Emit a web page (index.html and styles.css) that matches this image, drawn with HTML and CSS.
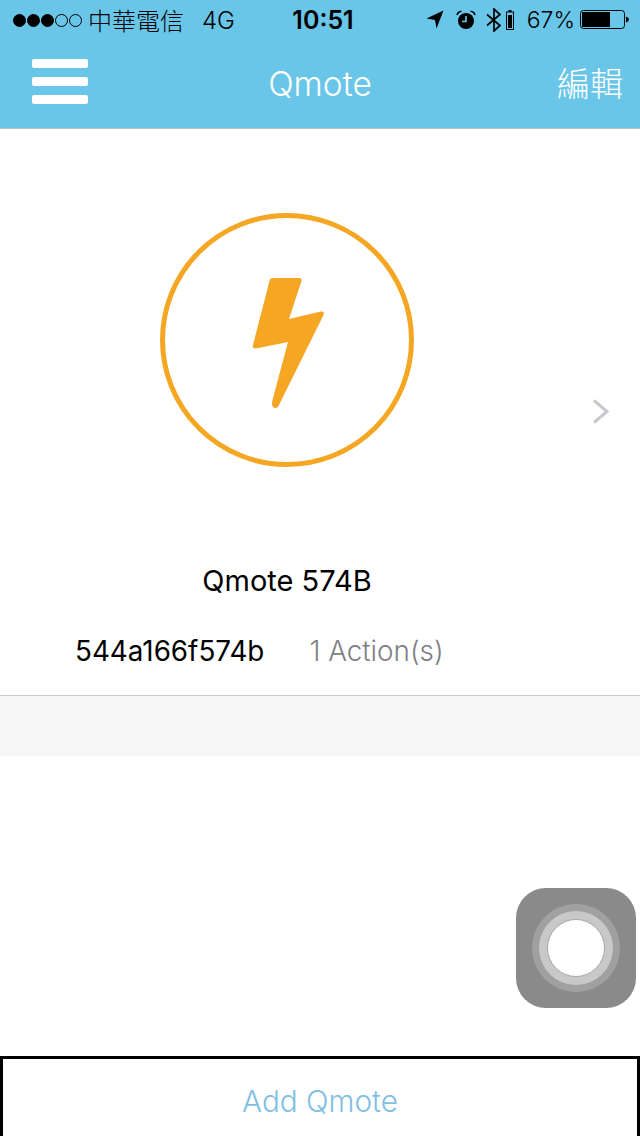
FILE: index.html
```html
<!DOCTYPE html>
<html lang="zh-Hant">
<head>
  <meta charset="UTF-8" />
  <title>Qmote</title>
  <link rel="stylesheet" href="styles.css">
</head>
<body>
  <div class="page">
    <header class="top-bar">
      <div class="status-bar">
        <div class="status-left">
          <span class="signal">
            <i class="dot"></i><i class="dot"></i><i class="dot"></i><i class="dot off"></i><i class="dot off"></i>
          </span>
          <span class="carrier">中華電信</span>
          <span class="network">4G</span>
        </div>
        <div class="status-time">10:51</div>
        <div class="status-right">
          <svg class="icon-location" width="18" height="20" viewBox="0 0 18 20">
            <path d="M0.5 8.5 L17.5 0.5 L10.5 18.5 L9 10 Z" fill="#000"/>
          </svg>
          <svg class="icon-alarm" width="20" height="20" viewBox="0 0 20 20">
            <circle cx="10" cy="11" r="8" fill="#000"/>
            <path d="M10 6 V11.5 H6" fill="none" stroke="#6ac6e8" stroke-width="1.6"/>
            <path d="M1 5 Q2 1.5 5.5 1.2 M19 5 Q18 1.5 14.5 1.2" fill="none" stroke="#000" stroke-width="1.6"/>
          </svg>
          <svg class="icon-bluetooth" width="16" height="24" viewBox="0 0 16 24">
            <path d="M1 6.5 L14 17.5 L8 23 V1 L14 6.5 L1 17.5" fill="none" stroke="#000" stroke-width="1.7"/>
          </svg>
          <svg class="icon-mini-battery" width="8" height="20" viewBox="0 0 8 20">
            <rect x="2.5" y="0" width="3" height="2" fill="#000"/>
            <rect x="0.5" y="2" width="7" height="17.5" fill="none" stroke="#000"/>
            <rect x="2" y="5" width="4" height="13" fill="#000"/>
          </svg>
          <span class="battery-text">67%</span>
          <svg class="icon-battery" width="49" height="20" viewBox="0 0 49 20">
            <rect x="0.5" y="0.5" width="44" height="18" rx="3" fill="none" stroke="#000"/>
            <rect x="2" y="2" width="28" height="15" fill="#000"/>
            <path d="M46 6.5 Q49 7.5 49 9.5 Q49 11.5 46 12.5 Z" fill="#000"/>
          </svg>
        </div>
      </div>
      <nav class="nav-bar">
        <div class="nav-side">
          <div class="menu-icon"><span></span><span></span><span></span></div>
        </div>
        <div class="nav-title">Qmote</div>
        <div class="nav-side nav-side-right">
          <div class="nav-edit">編輯</div>
        </div>
      </nav>
    </header>

    <main class="content">
      <section class="hero">
        <svg class="qmote-ring" width="254" height="254" viewBox="0 0 254 254">
          <circle cx="127" cy="127" r="124.5" fill="none" stroke="#f5a623" stroke-width="5"/>
          <path d="M113 65 H139 Q142.5 65 141.5 68 L129 106 L161 98.500 Q165 98 163.500 102 L118.500 193 Q115 197.500 112.500 193 Q111.500 191 112.500 187 L128 129 L96 135.500 Q92 135.500 93 132 L109.500 68 Q110 65 113 65 Z" fill="#f5a623"/>
        </svg>
        <svg class="chevron" width="18" height="25" viewBox="0 0 18 25">
          <path d="M2 1.500 L15 12.500 L2 23.500" fill="none" stroke="#c8c8cd" stroke-width="3"/>
        </svg>
      </section>

      <div class="device-name">Qmote 574B</div>
      <div class="device-meta">
        <span class="device-id">544a166f574b</span>
        <span class="device-actions">1 Action(s)</span>
      </div>

      <div class="gray-band"></div>
    </main>

    <button class="add-button">Add Qmote</button>

    <div class="assistive-touch">
      <div class="touch-outer">
        <div class="touch-middle">
          <div class="touch-inner"></div>
        </div>
      </div>
    </div>
  </div>
</body>
</html>
```

FILE: styles.css
```css
html, body {
  margin: 0;
  padding: 0;
}

body {
  font-family: "Inter", "Noto Sans CJK TC", sans-serif;
  background-color: #ffffff;
  color: #000000;
}

.page {
  position: relative;
  width: 640px;
  height: 1136px;
  display: flex;
  flex-direction: column;
  overflow: hidden;
}

.top-bar {
  background-color: #6ac6e8;
  height: 128px;
  border-bottom: 1px solid #b9c4c8;
}

.status-bar {
  height: 40px;
  display: flex;
  align-items: center;
  padding: 0 11px 0 13px;
  font-size: 23px;
}

.status-left {
  flex: 1;
  display: flex;
  align-items: center;
}

.signal {
  display: flex;
  gap: 1px;
  margin-right: 6px;
}

.dot {
  width: 13px;
  height: 13px;
  border-radius: 50%;
  background-color: #000000;
  border: 1px solid #000000;
  box-sizing: border-box;
}

.dot.off {
  background-color: transparent;
}

.carrier {
  font-family: "Noto Sans CJK TC", sans-serif;
  font-size: 24px;
  font-weight: 300;
  line-height: 40px;
}

.network {
  margin-left: 18px;
  font-weight: 300;
  font-size: 24px;
}

.status-time {
  font-size: 25px;
  font-weight: 600;
  margin-left: 4px;
}

.status-right {
  flex: 1;
  display: flex;
  align-items: center;
  justify-content: flex-end;
}

.icon-location {
  margin-right: 12px;
}

.icon-alarm {
  margin-right: 10px;
}

.icon-bluetooth {
  margin-right: 4px;
}

.battery-text {
  margin: 0 5px 0 13px;
  font-weight: 300;
}

.nav-bar {
  height: 88px;
  display: flex;
  align-items: center;
  padding: 0 17px;
  color: #ffffff;
}

.nav-side {
  flex: 1;
  display: flex;
}

.nav-side-right {
  justify-content: flex-end;
}

.menu-icon {
  display: flex;
  flex-direction: column;
  gap: 9px;
  width: 56px;
  margin: -6px 0 0 15px;
}

.menu-icon span {
  height: 9px;
  border-radius: 2px;
  background-color: #ffffff;
}

.nav-title {
  font-size: 33.5px;
  font-weight: 300;
}

.nav-edit {
  font-family: "Noto Sans CJK TC", sans-serif;
  font-size: 33px;
  font-weight: 300;
  margin-top: -5px;
}

.content {
  flex: 1;
}

.hero {
  display: flex;
  justify-content: space-between;
  align-items: flex-start;
  padding: 84px 30px 0 160px;
}

.qmote-ring {
  display: block;
}

.chevron {
  display: block;
  margin-top: 186px;
}

.device-name {
  width: 574px;
  margin-top: 94px;
  text-align: center;
  font-size: 29px;
  line-height: 40px;
}

.device-meta {
  display: flex;
  gap: 45px;
  padding: 30px 0 0 75px;
  height: 64px;
  font-size: 27.8px;
  line-height: 40px;
  border-bottom: 1px solid #cccccc;
}

.device-actions {
  color: #808085;
  font-weight: 300;
}

.gray-band {
  height: 60px;
  background-color: #f6f6f6;
}

.add-button {
  display: block;
  width: 640px;
  height: 80px;
  flex-shrink: 0;
  background-color: #ffffff;
  border: 3px solid #000000;
  border-bottom: none;
  border-radius: 0;
  padding: 6px 0 0;
  font-family: inherit;
  font-size: 29.7px;
  font-weight: 300;
  color: #7fbfe3;
}

.assistive-touch {
  position: absolute;
  left: 516px;
  top: 888px;
  width: 120px;
  height: 120px;
  border-radius: 30px;
  background-color: #8a8a8a;
  display: flex;
  align-items: center;
  justify-content: center;
}

.touch-outer {
  width: 88px;
  height: 88px;
  border-radius: 50%;
  background-color: #a0a0a0;
  display: flex;
  align-items: center;
  justify-content: center;
}

.touch-middle {
  width: 74px;
  height: 74px;
  border-radius: 50%;
  background-color: #c8c8c8;
  display: flex;
  align-items: center;
  justify-content: center;
}

.touch-inner {
  width: 58px;
  height: 58px;
  border-radius: 50%;
  background-color: #ffffff;
  border: 1px solid #a8a8a8;
  box-sizing: border-box;
}
```
